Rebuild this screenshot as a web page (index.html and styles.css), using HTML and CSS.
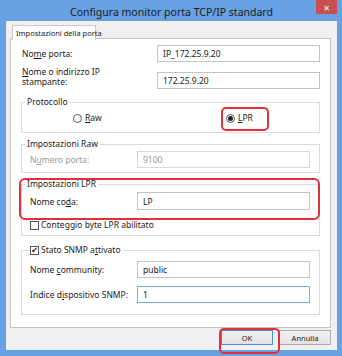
FILE: index.html
```html
<!DOCTYPE html>
<html>
<head>
    <title>Configura monitor porta TCP/IP standard</title>
    <link rel="stylesheet" href="styles.css">
</head>
<body>
    <div class="window">
        <div class="titlebar">
            <span class="title">Configura monitor porta TCP/IP standard</span>
            <span class="close">&#x2715;</span>
        </div>

        <div class="client">
            <div class="tabs">
                <span class="tab active">Impostazioni della porta</span>
            </div>

            <div class="panel">
                <div class="row first">
                    <label class="lbl">No<u>m</u>e porta:</label>
                    <input class="field" type="text" value="IP_172.25.9.20">
                </div>
                <div class="row two-line">
                    <label class="lbl"><u>N</u>ome o indirizzo IP<br>stampante:</label>
                    <input class="field" type="text" value="172.25.9.20">
                </div>

                <fieldset class="group protocol">
                    <legend>Protocollo</legend>
                    <div class="radios">
                        <span class="radio-item raw"><span class="radio"></span><u>R</u>aw</span>
                        <span class="radio-item lpr mark"><span class="radio checked"></span><u>L</u>PR</span>
                    </div>
                </fieldset>

                <fieldset class="group raw-group">
                    <legend>Impostazioni Raw</legend>
                    <div class="grow">
                        <label class="glbl disabled">N<u>u</u>mero porta:</label>
                        <input class="field" type="text" value="9100" disabled>
                    </div>
                </fieldset>

                <fieldset class="group lpr-group">
                    <legend>Impostazioni LPR</legend>
                    <div class="grow">
                        <label class="glbl">Nome co<u>d</u>a:</label>
                        <input class="field" type="text" value="LP">
                    </div>
                    <div class="check-row">
                        <span class="check"></span>Conte<u>g</u>gio byte LPR abilitato
                    </div>
                </fieldset>

                <fieldset class="group snmp-group">
                    <legend><span class="check checked">&#10004;</span>Stato SNMP a<u>t</u>tivato</legend>
                    <div class="grow">
                        <label class="glbl">Nome <u>c</u>ommunity:</label>
                        <input class="field" type="text" value="public">
                    </div>
                    <div class="grow second">
                        <label class="glbl">Indice d<u>i</u>spositivo SNMP:</label>
                        <input class="field focus" type="text" value="1">
                    </div>
                </fieldset>
            </div>

            <div class="buttons">
                <button class="btn default mark">OK</button>
                <button class="btn">Annulla</button>
            </div>
        </div>
    </div>
</body>
</html>
```

FILE: styles.css
```css
* { box-sizing: border-box; }
body { margin: 0; font-family: "Noto Sans", "DejaVu Sans", sans-serif; font-size: 8.5px; color: #1a1a1a; }
u { text-decoration: underline; text-underline-offset: 1px; }

.window {
    width: 342px; height: 356px; background-color: #67a1e3;
    padding: 0 5px 6px 6px; display: flex; flex-direction: column;
}
.titlebar { height: 21px; position: relative; display: flex; justify-content: center; align-items: center; }
.title { font-size: 10.5px; color: #1c1c1c; padding-top: 2px; }
.close {
    position: absolute; top: 0; right: 0; width: 21px; height: 14px; background-color: #c75150;
    color: #fff; font-size: 8px; font-weight: bold; display: flex; justify-content: center; align-items: center;
}

.client { flex: 1; background-color: #f0f0f0; padding: 4px 6px 0 4px; display: flex; flex-direction: column; }
.tabs { display: flex; padding-left: 2px; height: 14px; position: relative; z-index: 1; margin-bottom: -1px; }
.tab {
    background-color: #fff; border: 1px solid #c9c9c9; border-bottom: none; font-size: 7.5px;
    padding: 0 5px 0 3px; line-height: 14px; height: 15px; width: 84px; white-space: nowrap;
}
.panel {
    width: 321px; height: 290px; background-color: #fff; border: 1px solid #c3c3c3;
    padding: 6px 10px 0 10px;
}

.row { display: flex; padding-left: 1px; }
.row .lbl { width: 135px; line-height: 17px; }
.row .field { width: 163px; }
.row.two-line { margin-top: 5px; align-items: flex-start; }
.row.two-line .lbl { line-height: 10px; }
.row.two-line .field { margin-top: 5px; }

.field {
    height: 17px; border: 1px solid #c4c4c4; background-color: #fff; font: inherit; color: #1a1a1a;
    padding: 0 5px; outline: none;
}
.field:disabled { border-color: #d9d9d9; background-color: #fff; color: #9a9a9a; }
.field.focus { border-color: #7aaee0; }

.group { border: 1px solid #dcdcdc; margin: 0; padding: 0; min-width: 0; width: 299px; }
.group legend { margin-left: 3px; padding: 0 2px; line-height: 12px; }
.protocol { margin-top: 7px; padding-bottom: 8px; }
.raw-group { margin-top: 5px; padding-bottom: 4px; }
.lpr-group { margin-top: 5px; padding-bottom: 5px; position: relative; }
.snmp-group { margin-top: 8px; padding-bottom: 11px; }
.snmp-group legend { margin-left: 8px; padding: 0 2px 0 0; display: flex; align-items: center; }

.radios { display: flex; margin-top: 4px; height: 12px; align-items: center; padding-left: 51px; }
.radio-item { display: flex; align-items: center; line-height: 12px; }
.radio-item.raw { width: 153px; }
.radio {
    width: 9px; height: 9px; border: 1px solid #555; border-radius: 50%; margin-right: 3px;
    background-color: #fff; display: inline-flex; justify-content: center; align-items: center;
}
.radio.checked::before { content: ""; width: 5px; height: 5px; border-radius: 50%; background-color: #222; }

.grow { display: flex; align-items: center; padding-left: 8px; margin-top: 1px; }
.glbl { width: 107px; }
.grow .field { width: 173px; }
.lpr-group .grow { margin-top: 2px; }
.lpr-group .grow .field { height: 18px; }
.snmp-group .grow { margin-top: 5px; }
.snmp-group .grow.second { margin-top: 8px; }
.disabled { color: #9a9a9a; }

.check-row { display: flex; align-items: center; padding-left: 8px; margin-top: 9px; line-height: 12px; }
.lpr-group { padding-bottom: 4px; }
.check {
    width: 9px; height: 9px; border: 1px solid #555; background-color: #fff; margin-right: 2px;
    display: inline-flex; justify-content: center; align-items: center; font-size: 8px; line-height: 1;
    color: #222;
}

.buttons { display: flex; justify-content: flex-end; gap: 6px; margin-top: 2px; }
.btn {
    width: 52px; height: 15px; font: inherit; font-size: 7.5px; color: #1a1a1a; padding: 0;
    background: linear-gradient(#f1f1f1, #e3e3e3); border: 1px solid #acacac;
}
.btn.default { border-color: #4a8fd0; }

.mark { position: relative; }
.radio-item.mark::after {
    content: ""; position: absolute; left: -5px; top: -5px; width: 44px; height: 20px;
    border: 2px solid #e0313b; border-radius: 5px;
}
.btn.mark::after {
    content: ""; position: absolute; left: -3px; top: -3px; width: 57px; height: 22px;
    border: 2px solid #e0313b; border-radius: 5px;
}
.lpr-group::after {
    content: ""; position: absolute; left: -3px; top: -12px; width: 297px; height: 38px;
    border: 2px solid #e0313b; border-radius: 6px;
}
```
